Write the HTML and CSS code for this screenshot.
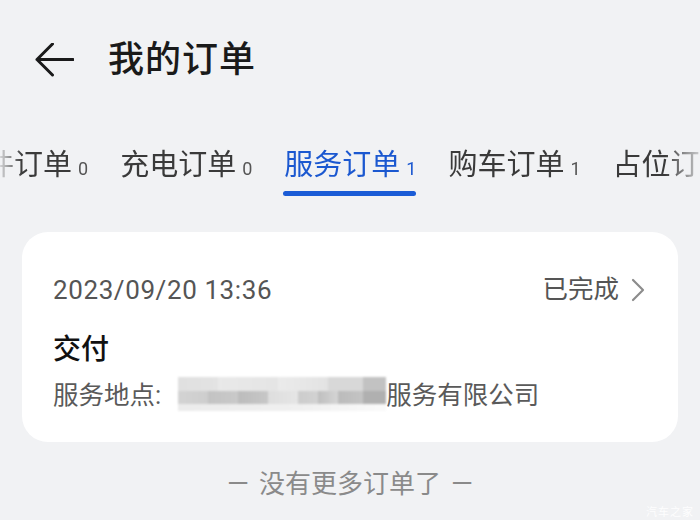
FILE: index.html
```html
<!DOCTYPE html>
<html lang="zh-CN">
<head>
<meta charset="utf-8">
<title>我的订单</title>
<link rel="stylesheet" href="styles.css">
</head>
<body>
<div class="page">
  <header class="header">
    <svg class="back" width="40" height="40" viewBox="0 0 40 40" aria-hidden="true">
      <path d="M39 16.5 H3 M18.5 1 L3 16.5 L18.5 32" fill="none" stroke="#1a1a1a" stroke-width="3" stroke-linecap="round" stroke-linejoin="round"/>
    </svg>
    <h1 class="title">我的订单</h1>
  </header>

  <nav class="tabs">
    <div class="tab-track">
      <div class="tab"><div class="tab-label">配件订单<span class="num">0</span></div></div>
      <div class="tab"><div class="tab-label">充电订单<span class="num">0</span></div></div>
      <div class="tab active"><div class="tab-label">服务订单<span class="num">1</span></div><div class="bar"></div></div>
      <div class="tab"><div class="tab-label">购车订单<span class="num">1</span></div></div>
      <div class="tab"><div class="tab-label">占位订单<span class="num">0</span></div></div>
    </div>
  </nav>

  <section class="card">
    <div class="row-top">
      <span class="date">2023/09/20 13:36</span>
      <span class="status">已完成
        <svg class="chev" width="14" height="24" viewBox="0 0 14 24" aria-hidden="true"><path d="M2 2 L12 12 L2 22" fill="none" stroke="#8c8c8c" stroke-width="2.2" stroke-linecap="round" stroke-linejoin="round"/></svg>
      </span>
    </div>
    <div class="kind">交付</div>
    <div class="place">服务地点:<span class="mosaic"><span class="m r1"></span><span class="m r2"></span><span class="m r3"></span></span>服务有限公司</div>
  </section>

  <div class="end"><span class="dash">—</span>没有更多订单了<span class="dash">—</span></div>
  <div class="wm">汽车之家</div>
</div>
</body>
</html>
```

FILE: styles.css
```css
* { box-sizing: border-box; }
html, body { margin: 0; padding: 0; }
body {
  background: #f1f2f4;
  font-family: Roboto, "Noto Sans CJK SC", "Noto Sans", sans-serif;
  color: #1a1a1a;
  width: 700px;
  height: 520px;
  overflow: hidden;
}
.page { position: relative; height: 520px; }

.header {
  height: 120px;
  display: flex;
  align-items: center;
  padding-left: 34px;
}
.back { display: block; margin-top: 5px; }
.title {
  margin: 0 0 0 34px;
  font-size: 36px;
  font-weight: 500;
  line-height: 40px;
  letter-spacing: 1px;
  color: #1a1a1a;
}

.tabs {
  padding-top: 25px;
  overflow: hidden;
  -webkit-mask-image: linear-gradient(to right, rgba(0,0,0,0.15) 0, #000 22px, #000 665px, rgba(0,0,0,0.2) 700px);
  mask-image: linear-gradient(to right, rgba(0,0,0,0.15) 0, #000 22px, #000 665px, rgba(0,0,0,0.2) 700px);
}
.tab-track {
  display: flex;
  gap: 32px;
  margin-left: -44px;
  white-space: nowrap;
}
.tab {
  display: flex;
  flex-direction: column;
  align-items: stretch;
}
.tab-label {
  height: 40px;
  font-size: 29px;
  line-height: 40px;
  color: #3a3a3a;
  display: flex;
  align-items: baseline;
}
.num {
  font-size: 18px;
  line-height: 40px;
  margin-left: 6px;
  color: #555;
}
.tab.active .tab-label, .tab.active .num { color: #1b58d0; }
.bar {
  height: 5px;
  margin-top: 6px;
  margin-left: -1px;
  border-radius: 3px;
  background: #1b5cd6;
}

.card {
  margin: 36px 22px 0;
  background: #fff;
  border-radius: 26px;
  padding: 40px 33px 29px 31px;
}
.row-top {
  display: flex;
  justify-content: space-between;
  align-items: center;
  height: 36px;
}
.date {
  font-size: 26px;
  color: #555;
  letter-spacing: 0.6px;
}
.status {
  display: flex;
  align-items: center;
  font-size: 25.5px;
  line-height: 36px;
  margin-top: -3px;
  color: #555;
}
.chev { margin-left: 12px; margin-top: 2px; }
.kind {
  margin-top: 24px;
  font-size: 28px;
  line-height: 36px;
  font-weight: 500;
  color: #111;
}
.place {
  margin-top: 9px;
  font-size: 25.5px;
  line-height: 36px;
  color: #5a5a5a;
  display: flex;
  align-items: center;
}
.mosaic {
  display: inline-flex;
  flex-direction: column;
  width: 208px;
  height: 36px;
  margin-left: 17px;
  filter: blur(1.2px);
}
.m { display: block; }
.r1 {
  height: 14px;
  background: linear-gradient(to right,
    #e0e0e0 0, #e3e3e3 40px, #e9e9e9 40px, #e5e5e5 100px, #ebebeb 100px, #e3e3e3 150px,
    #d8d8d8 150px, #d8d8d8 185px, #c2c2c2 185px, #c2c2c2 208px);
}
.r2 {
  height: 13px;
  background: linear-gradient(to right,
    #d3d3d3 0, #cecece 30px, #c3c3c3 30px, #c9c9c9 60px, #bcbcbc 60px, #c7c7c7 90px,
    #dedede 90px, #e5e5e5 120px, #cccccc 120px, #d2d2d2 140px, #bfbfbf 140px, #d5d5d5 160px,
    #bbbbbb 160px, #c4c4c4 185px, #b0b0b0 185px, #b0b0b0 208px);
}
.r3 {
  height: 7px;
  background: linear-gradient(to right, #ececec 0, #f0f0f0 120px, #f9f9f9 200px);
}

.end {
  margin-top: 24px;
  display: flex;
  justify-content: center;
  align-items: center;
  gap: 10px;
  font-size: 26px;
  line-height: 36px;
  color: #8a8a8a;
}
.dash {
  font-family: Roboto, sans-serif;
  font-size: 28px;
  line-height: 36px;
}
.wm {
  position: absolute;
  right: 6px;
  bottom: 1px;
  font-size: 11px;
  color: rgba(255,255,255,0.9);
  letter-spacing: 1px;
}
```
